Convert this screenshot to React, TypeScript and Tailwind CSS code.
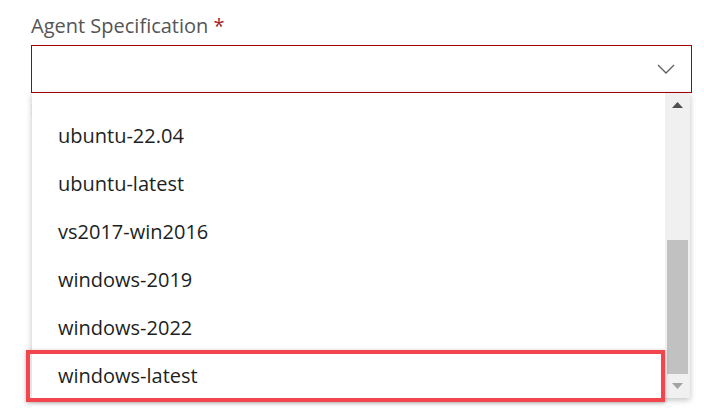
const OPTIONS = [
  'ubuntu-22.04',
  'ubuntu-latest',
  'vs2017-win2016',
  'windows-2019',
  'windows-2022',
  'windows-latest',
];

export default function App() {
  return (
    <div
      className="relative w-[704px] h-[409px] bg-white overflow-hidden text-[#323130]"
      style={{ fontFamily: '"Open Sans", "Noto Sans", sans-serif' }}
    >
      <div className="pl-[31px] pr-[12px] pt-[11px]">
        <label className="block text-[20px] leading-[30px] h-[34px] text-[#555555]">
          Agent Specification <span className="text-[#a4262c]">*</span>
        </label>
        <div className="relative flex items-center justify-end w-[661px] h-[48px] border border-[#a80000] bg-white pr-[16px]">
          <svg width="18" height="10" viewBox="0 0 18 10" fill="none" stroke="#605e5c" strokeWidth="1.3">
            <path d="M1 1 L9 9 L17 1" />
          </svg>
        </div>
        <p className="mt-[6px] text-[14px] text-[#a4262c]">!</p>
      </div>

      {/* Dropdown popup */}
      <div className="absolute left-[32px] top-[93px] w-[658px] h-[305px] bg-white flex shadow-[0_2px_6px_rgba(0,0,0,0.25)]">
        <div className="flex-1 overflow-hidden pt-[19px]">
          {OPTIONS.map((o) => (
            <div key={o} className="h-[48px] flex items-center pl-[26px] text-[20px] text-[#201f1e]">
              {o}
            </div>
          ))}
        </div>
        <div className="w-[25px] bg-[#f0f0f0] flex flex-col items-center">
          <div className="h-[24px] flex items-center justify-center">
            <svg width="11" height="6" viewBox="0 0 11 6">
              <path d="M0 6 L5.5 0 L11 6 Z" fill="#505050" />
            </svg>
          </div>
          <div className="flex-1 w-full px-[2px] pt-[123px] pb-[24px]">
            <div className="w-full h-full bg-[#c1c1c1]" />
          </div>
          <div className="h-[0px] relative w-full">
            <svg className="absolute left-[7px] top-[-15px]" width="11" height="6" viewBox="0 0 11 6">
              <path d="M0 0 L11 0 L5.5 6 Z" fill="#a3a3a3" />
            </svg>
          </div>
        </div>
      </div>

      {/* highlight annotation */}
      <div className="absolute left-[26px] top-[350px] w-[639px] h-[52px] border-4 border-[#f2454c] shadow-[0_1px_4px_rgba(0,0,0,0.3)]" />
    </div>
  );
}
